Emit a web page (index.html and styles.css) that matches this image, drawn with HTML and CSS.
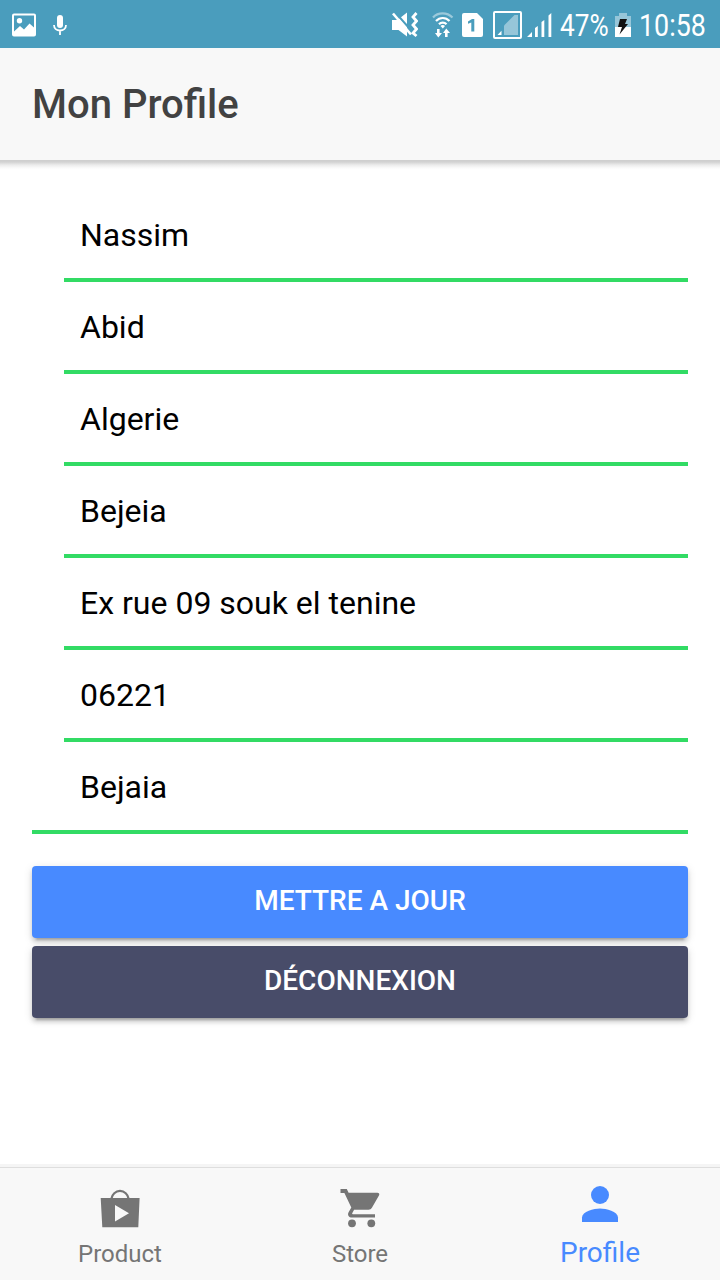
FILE: index.html
```
<!DOCTYPE html>
<html lang="fr">
<head>
    <meta charset="UTF-8">
    <meta name="viewport" content="width=device-width, initial-scale=1.0">
    <title>Mon Profile</title>
    <link rel="stylesheet" href="styles.css">
</head>
<body>
    <!-- Status bar -->
    <div class="status-bar">
        <svg class="icon-picture" width="24" height="24" viewBox="0 0 24 24">
            <path fill="#fff" fill-rule="evenodd" d="M2 .5h20a2 2 0 0 1 2 2v19a2 2 0 0 1-2 2H2a2 2 0 0 1-2-2v-19a2 2 0 0 1 2-2zM2 2.500v16l6-5.500 4 3.500 5.500-6 4.500 4v-12z"/>
            <circle cx="7.500" cy="7.800" r="2.700" fill="#fff"/>
        </svg>
        <svg class="icon-mic" width="14" height="22" viewBox="0 0 14 22">
            <rect x="4" y="1" width="6" height="13" rx="3" fill="#fff"/>
            <path d="M1 11c0 3.500 2.700 5.500 6 5.500s6-2 6-5.500M7 16.500V21" fill="none" stroke="#fff" stroke-width="1.800"/>
        </svg>

        <div class="status-right">
            <svg class="icon-mute" width="27" height="26" viewBox="0 0 27 26">
                <path d="M1 8h5.500L16 .5v24L7.500 18H1z" fill="#fff"/>
                <path d="M4 0l18 20.500" stroke="#4a9dbd" stroke-width="2"/>
                <path d="M2 1.500l18 21" stroke="#fff" stroke-width="2.600"/>
                <path d="M25.500 1l-3.500 4 3.500 4-3.500 4 3.500 4-3.500 4 3.500 3" fill="none" stroke="#fff" stroke-width="2.800"/>
            </svg>
            <svg class="icon-wifi" width="22" height="26" viewBox="0 0 22 26">
                <g fill="none" stroke="#fff" stroke-width="2.200">
                    <path d="M1 5.500C6 0 15 0 20.500 5.500" opacity=".45"/>
                    <path d="M4 9c3.700-4 9.800-4 13.500 0M7 12.300c2-2.200 5.500-2.200 7.500 0"/>
                </g>
                <path d="M8.500 14a3 3 0 0 1 4.500 0l-2.200 2.500z" fill="#fff"/>
                <path d="M5 17h2.600v4H10l-3.700 4.500L3 21h2zM13 25h2.600v-4H18l-3.700-4.500L11 21h2z" fill="#fff"/>
            </svg>
            <svg class="icon-sim" width="21" height="24" viewBox="0 0 21 24">
                <path d="M2 0h13l6 6v16a2 2 0 0 1-2 2H2a2 2 0 0 1-2-2V2a2 2 0 0 1 2-2z" fill="#fff"/>
                <path d="M6 8.500L10 6h2.300v12.500H9.300V9.400L6 10.800z" fill="#4a9dbd"/>
            </svg>
            <svg class="icon-roaming" width="29" height="28" viewBox="0 0 29 28">
                <rect x="1" y="1" width="27" height="26" rx="1" fill="none" stroke="#fff" stroke-width="2"/>
                <path d="M11 24v-9.500L21.500 4H25v20z" fill="#fff" opacity=".42"/>
                <path d="M4.500 24l4-4.200V24z" fill="#fff"/>
            </svg>
            <svg class="icon-signal" width="25" height="24" viewBox="0 0 25 24">
                <path d="M0 24l5-5v5zM8 15l2.800-2v11H8zM14.500 9l2.800-2v17h-2.800zM21.500 2.500L24.300 0v24h-2.800z" fill="#fff"/>
            </svg>
            <span class="battery-text"><span class="condensed">47%</span></span>
            <svg class="icon-battery" width="16" height="24" viewBox="0 0 16 24">
                <path d="M0 3h4V0h8v3h4v11H0z" fill="#fff" opacity=".42"/>
                <path d="M0 14h16v10H0z" fill="#fff"/>
                <path d="M5 6h7l-2 5h3L4.500 21.500 7 14H3z" fill="#111"/>
            </svg>
            <span class="clock"><span class="condensed">10:58</span></span>
        </div>
    </div>

    <!-- Header -->
    <header class="toolbar">
        <h1>Mon Profile</h1>
    </header>

    <!-- Profile form -->
    <main class="content">
        <form class="profile-form">
            <div class="item"><span class="value">Nassim</span></div>
            <div class="item"><span class="value">Abid</span></div>
            <div class="item"><span class="value">Algerie</span></div>
            <div class="item"><span class="value">Bejeia</span></div>
            <div class="item"><span class="value">Ex rue 09 souk el tenine</span></div>
            <div class="item"><span class="value">06221</span></div>
            <div class="item item-last"><span class="value">Bejaia</span></div>
        </form>
        <button class="btn btn-update" type="button">Mettre a jour</button>
        <button class="btn btn-logout" type="button">Déconnexion</button>
    </main>

    <!-- Tabs -->
    <nav class="tabs">
        <a class="tab">
            <svg width="40" height="40" viewBox="0 0 40 40">
                <path d="M11.300 11a8.800 9.500 0 0 1 17.400 0" fill="none" stroke="currentColor" stroke-width="2.200"/>
                <path fill="currentColor" fill-rule="evenodd" d="M.7 10h38.900l-1.300 29.300H2.300zM15 17v16.500l14-8.300z"/>
            </svg>
            <span>Product</span>
        </a>
        <a class="tab">
            <svg width="40" height="40" viewBox="0 0 40 40">
                <g fill="currentColor">
                    <circle cx="12" cy="35.300" r="3.900"/>
                    <circle cx="31.300" cy="35.300" r="3.900"/>
                    <path d="M.5 1v3.900h3.900l6.900 14.600-2.700 4.700c-1.600 2.900.5 5.300 3.400 5.300h23v-3.300H12.800c-.6 0-.8-.5-.6-.9l1.900-3.500h14.400c1.500 0 2.700-.8 3.400-2l7.200-12.500c.7-1.300-.2-2.500-1.700-2.500H8.600L6.800 1z"/>
                </g>
            </svg>
            <span>Store</span>
        </a>
        <a class="tab tab-active">
            <svg width="40" height="40" viewBox="0 0 40 40">
                <circle cx="20" cy="11" r="9" fill="currentColor"/>
                <path d="M2 38v-4.500C2 27.500 14 24.500 20 24.500s18 3 18 9V38z" fill="currentColor"/>
            </svg>
            <span>Profile</span>
        </a>
    </nav>
</body>
</html>
```
FILE: styles.css
```
* {
    box-sizing: border-box;
}

body {
    margin: 0;
    height: 1280px;
    display: flex;
    flex-direction: column;
    font-family: Roboto, sans-serif;
    background-color: #fff;
    color: #000;
    overflow: hidden;
}

svg {
    display: block;
    flex: none;
}

/* Status bar */
.status-bar {
    height: 48px;
    flex: none;
    display: flex;
    align-items: center;
    padding: 2px 14px 0 12px;
    background-color: #4a9dbd;
    color: #fff;
}

.icon-mic {
    margin-left: 17px;
}

.status-right {
    display: flex;
    align-items: center;
    margin-left: auto;
}

.icon-wifi {
    margin-left: 14px;
}

.icon-sim {
    margin-left: 8px;
}

.icon-roaming {
    margin-left: 10px;
}

.icon-signal {
    margin-left: 5px;
}

.battery-text,
.clock {
    padding-top: 1px;
    font-size: 31px;
    line-height: 36px;
    white-space: nowrap;
}

.battery-text {
    width: 48px;
    margin-left: 8px;
}

.clock {
    width: 67px;
    margin-left: 8px;
}

.icon-battery {
    margin-left: 7px;
}

.condensed {
    display: inline-block;
    transform: scaleX(0.845);
    transform-origin: left;
}

.clock .condensed {
    transform: scaleX(0.865);
}

/* Header */
.toolbar {
    height: 112px;
    flex: none;
    display: flex;
    align-items: center;
    padding: 0 32px;
    background-color: #f8f8f8;
}

.toolbar h1 {
    margin: 0;
    font-size: 40px;
    font-weight: 500;
    color: #424242;
}

/* Form, with the toolbar shadow along its top edge */
.content {
    flex: 1;
    padding: 30px 32px 0;
    background: linear-gradient(#cecece 0, #d2d2d2 2px, #ececec 5px, #fafafa 8px, #fff 10px) no-repeat;
    background-size: 100% 10px;
}

.profile-form {
    margin-bottom: 32px;
}

.item {
    height: 92px;
    display: flex;
    align-items: center;
    margin-left: 32px;
    padding: 2px 16px 0;
    border-bottom: 4px solid #32db64;
    font-size: 32px;
}

.item-last {
    margin-left: 0;
    padding-left: 48px;
}

.btn {
    display: block;
    width: 100%;
    height: 72px;
    margin: 0 0 8px;
    padding: 0 0 3px;
    border: 0;
    border-radius: 4px;
    font-family: inherit;
    font-size: 28px;
    font-weight: 500;
    text-transform: uppercase;
    color: #fff;
    box-shadow: 0 4px 4px rgba(0, 0, 0, 0.14), 0 6px 2px -4px rgba(0, 0, 0, 0.2), 0 2px 10px rgba(0, 0, 0, 0.12);
}

.btn-update {
    background-color: #488aff;
}

.btn-logout {
    background-color: #484c69;
}

/* Tabs */
.tabs {
    height: 113px;
    flex: none;
    display: flex;
    background-color: #f8f8f8;
    border-top: 1px solid #dedede;
    box-shadow: 0 -3px 0 #f5f5f5;
}

.tab {
    flex: 1;
    display: flex;
    flex-direction: column;
    align-items: center;
    padding-top: 20px;
    color: #757575;
    font-size: 24px;
    line-height: 28px;
}

.tab span {
    margin-top: 12px;
}

.tab-active {
    padding-top: 16px;
    color: #488aff;
    font-size: 28px;
    line-height: 32px;
}

.tab-active span {
    margin-top: 13px;
}
```
